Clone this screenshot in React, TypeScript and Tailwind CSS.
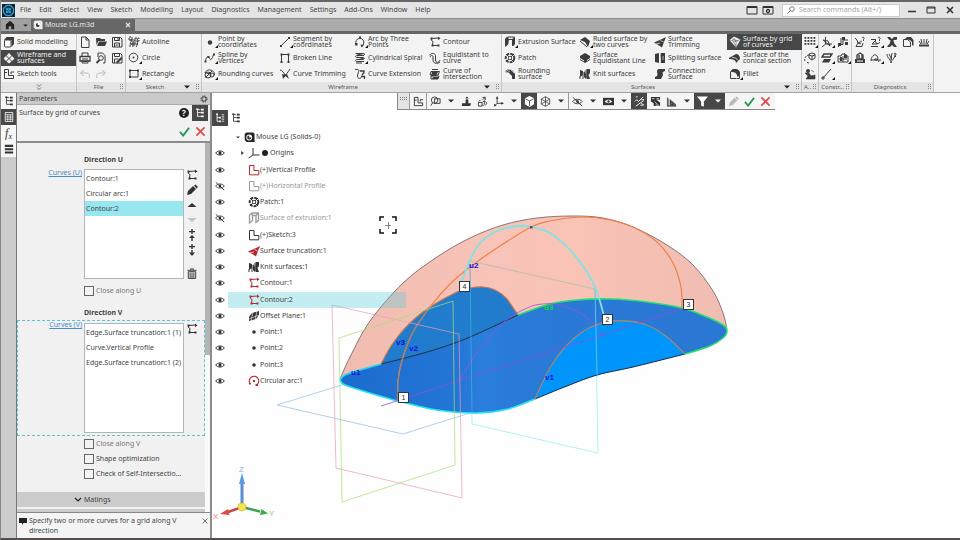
import React from 'react';
import clsx from 'clsx';

/* ---------- Icons (12 x 12 grid) ---------- */

const S = { fill: 'none', stroke: 'currentColor', strokeWidth: 1 };
const F = { fill: 'currentColor' };

const ICONS: Record<string, React.ReactNode> = {
  solid: (
    <>
      <path d="M1 4l2.5-3H11v7l-2.500 3V4z" {...F} />
      <rect x="1.500" y="4" width="6.500" height="7" rx="1" fill="#fff" stroke="currentColor" />
    </>
  ),
  grid: (
    <>
      <path d="M3.500 3.500L6 1l2.500 2.500L6 6zM.5 6.500L3 4l2.500 2.500L3 9zM6.500 6.500L9 4l2.500 2.500L9 9zM3.500 9.500L6 7l2.500 2.500L6 11.500z" {...F} />
    </>
  ),
  sketchTools: <path d="M1.500 1.500v9h9v-3h-5v-6zM8 6V4h3M1 4.500h3" {...S} />,
  newDoc: <path d="M2.500 1h4.500l3 3v7.500h-7.500zM7 1v3h3" {...S} />,
  open: <path d="M1 2h4l1 1h4v2H3.500L1.500 9zM4 5.500h8L10 10H2z" {...F} />,
  save: <path d="M1.500 1.500h8l1.500 1.500v8H1.500zM3.500 1.500v3h5v-3M3.500 11V7h5v4M4.500 9h3M7 2v2" {...S} />,
  print: (
    <>
      <path d="M3 4V1h6v3M3 8v3h6V8M4 9.500h4" {...S} />
      <path d="M1 4.500h10V9H1z" fill="none" stroke="currentColor" strokeWidth="1.300" />
      <path d="M3 7h6" {...S} />
    </>
  ),
  preview: (
    <>
      <path d="M3 5V1h4.500L10 3.500V11H8" {...S} />
      <circle cx="6" cy="6" r="2.300" {...S} />
      <path d="M4.500 8L1.500 11" fill="none" stroke="currentColor" strokeWidth="2" />
    </>
  ),
  saveAs: (
    <>
      <path d="M1.500 1.500h8l1.500 1.500v8H1.500zM3.500 1.500v3h5v-3M3.500 11V7h4" {...S} />
      <path d="M5 10l5-5 1.500 1.500-5 5z" {...F} />
    </>
  ),
  undo: <path d="M5 2L1.500 5 5 8M2 5h5c3 0 4 2 3 5" {...S} />,
  redo: <path d="M7 2l3.500 3L7 8M10 5H5C2 5 1 7 2 10" {...S} />,
  autoline: (
    <>
      <path d="M2 11c0-4 1-5 2-8M5 11c-1-3 1-6 2-7M1 4h5M3 8h7M8 11c2-2 2-6 1-9" {...S} />
      <path d="M1 1h3v3H1zM7 2h4v3H7zM4 6h3v3H4z" fill="none" stroke="currentColor" strokeDasharray="2 1" />
    </>
  ),
  circle: (
    <>
      <circle cx="5.500" cy="5.500" r="4.300" {...S} />
      <circle cx="5.500" cy="5.500" r="1" {...F} />
    </>
  ),
  rect: (
    <>
      <path d="M2 2.500h8v6.500H2z" {...S} />
      <path d="M1 1.500h2v2H1zM9 1.500h2v2H9zM1 8h2v2H1z" {...F} />
    </>
  ),
  point: <circle cx="6" cy="6.500" r="2.200" {...F} />,
  spline: (
    <>
      <path d="M1.500 9.500C2 6 3 4 4.500 5S6 9 7.500 7 9 3 10 2.500" {...S} />
      <path d="M.5 8.500h2v2h-2zM3.500 4h2v2h-2zM9 1.500h2v2H9z" {...F} />
    </>
  ),
  rounding: (
    <>
      <path d="M1 4.500c2-3 5-3 7-2 2 1 3 3 2 5M1 4.500l5 1.500M1.500 9.500L8 3" {...S} />
      <circle cx="4" cy="7" r="3" {...S} />
      <circle cx="8" cy="7" r="2" {...S} />
    </>
  ),
  segment: (
    <>
      <path d="M2 10l8-8" {...S} />
      <path d="M1 9h2v2H1zM9 1h2v2H9z" {...F} />
    </>
  ),
  broken: (
    <>
      <path d="M2.500 10V2.500h7V10" {...S} />
      <path d="M1.500 1.500h2v2h-2zM8.500 1.500h2v2h-2zM1.500 9h2v2h-2zM8.500 9h2v2h-2z" {...F} />
    </>
  ),
  trimCurve: (
    <>
      <path d="M1 2c2 0 4 3 5 5M11 1c-2 3-4 6-7 9" {...S} />
      <path d="M3 6l4 1-3 4zM5 7l3-1 2 5z" {...F} />
    </>
  ),
  arc3: (
    <>
      <path d="M2.500 8.500a4 4 0 117-.5L8 10.500" {...S} />
      <path d="M1 7h2.500v2.500H1zM5 .5h2v2H5zM6.500 8.500L10 9l-2.500 2.500z" {...F} />
    </>
  ),
  spiral: <path d="M1.500 1.500h8c2 0 1 2-1 2H3c-2 0-2 2 0 2h6c2 0 1 2 0 2H3c-2 0-2 2 0 2h7M2 11h6M3 2l7 1.500M3 5l7 2" {...S} />,
  extend: (
    <>
      <path d="M1 1.500h2.500c3 0 0 4 0 6.500 0 3 3 3 4 1" {...S} />
      <path d="M6 3h4v1.500L8 7M7 8.500h3.500V11" fill="none" stroke="currentColor" strokeWidth="1.300" />
    </>
  ),
  contour: (
    <>
      <path d="M2.500 2.500L10 2M2.500 3v1.500L4 5.500 3.500 9.500H9" {...S} />
      <path d="M1.500 1.500h2v2h-2zM2.500 8.500h2v2h-2zM8.500 8.500h2v2h-2zM9 .5l2.500 2L9 4z" {...F} />
    </>
  ),
  equidist: <path d="M1 3.500C1 1 6 .5 6.500 3.500V8c0 3 4 3 4.500 0M1 5c1-2 3-2 3 0v3c0 4 5 4 7 2" {...S} />,
  intersect: (
    <>
      <path d="M2 3.500h8.500L9 7H1zM3 1.500h6M2 8h8l-1 3H2z" {...S} />
      <path d="M3 4h6l-2 4H2zM4 9h5v2H3z" {...F} />
    </>
  ),
  extrusion: (
    <>
      <path d="M1.500 3L4 1h6.500v6.500L8.500 10V3.500h-4L2 10z" {...S} />
      <path d="M1 3l2-2h1.500v7L1 11zM8 3l3-2v7l-2 2z" {...F} />
    </>
  ),
  patch: (
    <>
      <circle cx="6" cy="6" r="4.300" fill="none" stroke="currentColor" strokeWidth="2" strokeDasharray="3 1" />
      <path d="M2 2l8 8M10 2l-8 8" {...S} />
      <path d="M4 6l2-2 2 2-2 2z" fill="#fff" stroke="currentColor" strokeWidth=".8" />
    </>
  ),
  roundSurf: (
    <>
      <path d="M1 4c1-3 5-4 8-1l2 3v5H8V8L5 5z" {...F} />
      <path d="M1 4l5-3 4 4M3 5l3-2" fill="none" stroke="#fff" strokeWidth=".6" />
    </>
  ),
  ruled: (
    <>
      <path d="M1 4l5-3 5 4-5 1zM6 6l3 5 2-6z" {...F} />
      <path d="M1 5l7 6" {...S} />
    </>
  ),
  surfEq: (
    <>
      <path d="M1 4l5-3 5 3v4L6 11 1 8z" {...F} />
      <path d="M1 6.500l4 2.500M8 8.500l3-2" fill="none" stroke="#fff" />
    </>
  ),
  knit: (
    <>
      <path d="M1 2l3 1v4L1 9zM5 3l2 3v5l-2-2zM7.500 1H11v4L9.500 7 11 11H7.500z" {...F} />
      <path d="M1 8v3M4 4v7M7 2v8" {...S} />
    </>
  ),
  truncation: (
    <>
      <path d="M0 6.500l7-3L12 1l-2 5-2 5.500-3-2z" {...F} />
      <path d="M2 8l4-1M6.500 4.500l3 1.500" fill="none" stroke="#fff" strokeWidth=".7" />
    </>
  ),
  split: (
    <>
      <path d="M1 2l4-1v10L1 10zM6.500 1H11v10H6.500z" {...F} />
      <path d="M6 1c-1 4 1 6 0 10" fill="none" stroke="#fff" />
      <path d="M9 4v4" fill="none" stroke="#fff" strokeWidth=".6" />
    </>
  ),
  connect: <path d="M4 1h7v2L9 4c-1 1 0 2 0 3l-2 4H1V9l2-1c1-1 0-3 0-5z" {...F} />,
  gridWhite: (
    <>
      <path d="M.5 4L5 .5 11.500 3.500 7 11.500z" {...F} />
      <path d="M1 4l6 1.500L11 3.500M3 3l6 2M4 5l3 6M5 2l2 4v5" fill="none" stroke="#474747" strokeWidth=".5" />
    </>
  ),
  conical: (
    <>
      <path d="M0 6l7-4c3 0 4 3 4 5L7 11c0-3-3-4-7-4z" {...F} />
      <path d="M3 5.500c3 0 5 1 6 3" fill="none" stroke="#fff" strokeWidth=".7" />
    </>
  ),
  fillet: (
    <>
      <path d="M1.500 10.500V4l2-2.500h4c2 0 3 2 3 4v5H8" {...S} />
      <path d="M3 2c4-2 8 0 8 5L8.500 9C8 5 6 4 2 4z" {...F} />
      <path d="M1.500 10.500h6" {...S} />
    </>
  ),
  array: (
    <>
      {[1, 4, 7, 10].map((x) => [1, 4, 7].map((y) => <rect key={`${x}-${y}`} x={x - 0.500} y={y} width="1.800" height="1.800" {...F} />))}
    </>
  ),
  orbit: (
    <>
      <path d="M1 9a4.500 4.500 0 014-6M3 10.500l2 .5" fill="none" stroke="currentColor" strokeDasharray="2 1" />
      <path d="M5 2l3-1 3 1v4L8 8 5 6zM5 3l3 1 3-1M8 4v4" {...S} />
    </>
  ),
  person: (
    <>
      <circle cx="4" cy="3" r="2" {...F} />
      <path d="M1 5h4l2 3 4-1v4H2L4 8zM7 2l3 2" fill="currentColor" stroke="currentColor" strokeWidth=".6" />
    </>
  ),
  axes: <path d="M4.500 1v7H11M4.500 8L1 11M2 4l7 6M2 4l5 1 2 5" {...S} />,
  local: (
    <>
      <path d="M1 8.500h5V4h5M4 2v6l-3 3" {...S} />
      <path d="M5 1h3v3H5zM8 6h3v3H8zM1 7h3v3H1z" {...F} />
    </>
  ),
  plane: (
    <>
      <path d="M3 2h8L9 5H1z" fill="none" stroke="currentColor" strokeWidth="1.400" />
      <path d="M3 7h7l-2 3.500H1z" {...F} />
    </>
  ),
  control: (
    <>
      <path d="M1 4h3l1-2h3l1 2h2v6H1zM6 4v6M2 7h8" {...S} />
      <path d="M7 1l3 2v3H7zM3 5h2v4H3z" {...F} />
    </>
  ),
  diag: <path d="M10 1L2 10M1 9h2v2H1z" {...S} />,
  q1: <path d="M1 2l2 2 1 3-2 3.500h6L9 7M4 7l4-2M8 2c1-2 3 0 1.500 1.500V5M4 7l3 1" {...S} />,
  q2: <path d="M1 3.500h5M6 4L2 8h5l3-1.500M1 10.500h7M8 2c1-2 3 0 1.500 1.500V5M5 5l2 3" {...S} />,
  q3: (
    <>
      <path d="M1 1h3l2 2 2-2h3v3H8v3l3 4H8L6 9l-2 2H1l3-4V5z" {...F} />
      <path d="M1 4l4 1M7 5l4-1" fill="none" stroke="#fff" strokeWidth=".7" />
    </>
  ),
  q4: (
    <>
      <path d="M3 3l2-2h4l2.500 3v6L10 9V6L8 4z" {...F} />
      <path d="M1.500 3.500h4l3 2.500v4.500h-7z" {...S} />
    </>
  ),
  q5: (
    <>
      <path d="M1 9h10M3 8l-2-3M6 8V3M9 8l2-3M4 8L3 3M8 8l1-5" {...S} />
      <path d="M1 9h10v1.500H1z" {...F} />
    </>
  ),
  mass: (
    <>
      <path d="M1 7h10v4H1z" {...F} />
      <path d="M3 7V3l3-2 3 2v4M5 3v4h3V3" fill="none" stroke="currentColor" strokeWidth="1.400" />
      <path d="M3 9h6" stroke="#fff" />
    </>
  ),
  compass: <path d="M1 9c0-5 4-8 6-5s0 5-2 4 2-3 4 2M1 8h10" {...S} />,
  q7: <path d="M1 2c0 4 3 4 4 9 1-4 4-4 4-9M3 2l3 6M6 1l-1 7M8 2c1-2 3 0 1.500 1.500V5" {...S} />,
  zoom: (
    <>
      <circle cx="5" cy="4.500" r="3.500" {...S} />
      <path d="M5 3h6v5H5zM3 7L1 10.500" {...S} />
    </>
  ),
  normal: (
    <>
      <path d="M1 8h4V4h3v4h3l-1 3H1z" {...F} />
      <path d="M6.500 5V1M5 2.500L6.500 1 8 2.500" {...S} />
    </>
  ),
  rotate: <path d="M1.500 7h4v4h-4zM6 7l2-2v4l-2 2M2 6l2-2M6 1.500h3v3M9 1.500L6 4M9 6c2 1 2 3 0 4" {...S} />,
  triad: (
    <>
      <path d="M4.500 2v6H10M4.500 8L2 10.500" {...S} />
      <path d="M4.500 0l1.500 3H3zM12 8L9 6.500v3zM1 11.500l.5-3 2.500 2z" {...F} />
    </>
  ),
  cube: (
    <>
      <path d="M6 0l5 2.500v6.500L6 12 1 9V2.500z" {...F} />
      <path d="M1.500 3L6 5.500 10.500 3M6 5.500V11" fill="none" stroke="#444" />
    </>
  ),
  wireCube: <path d="M6 .8l4.500 2.500v5.500L6 11.200 1.500 8.800V3.300zM1.500 3.300L6 6l4.500-2.700M6 6v5.200M6 .8V6L1.500 8.800M6 6l4.500 2.800" fill="none" stroke="currentColor" strokeWidth=".8" />,
  eye: (
    <>
      <path d="M.8 6C3 2.800 9 2.800 11.200 6 9 9.200 3 9.200.8 6z" fill="none" stroke="currentColor" strokeWidth="1.200" />
      <circle cx="6" cy="6" r="1.800" {...F} />
    </>
  ),
  eyeOff: (
    <>
      <path d="M.8 6C3 2.800 9 2.800 11.200 6 9 9.200 3 9.200.8 6z" {...S} />
      <circle cx="6" cy="6" r="1.500" {...F} />
      <path d="M1 1.500l10 9.500" {...S} />
    </>
  ),
  eyeBox: (
    <>
      <path d="M0 2h12v8H0z" {...F} />
      <path d="M2 6c2-2.500 6-2.500 8 0-2 2.500-6 2.500-8 0z" fill="#fff" />
      <circle cx="6" cy="6" r="1.300" {...F} />
    </>
  ),
  percent: <path d="M1 6l2-2 2 2 5-5M10.500 5L2 11M8 8l3 2M7 10h3M2 1h2M8 4h3" {...S} />,
  texture: (
    <>
      <path d="M1 1h10v3H7l4 3v4H4V8L1 6z" {...F} />
      <path d="M2 3h3M7 3h3M5 6l3 3M6 10h4" stroke="#fff" strokeWidth=".8" />
    </>
  ),
  section: (
    <>
      <path d="M1 1l2 2v8H1zM4 3l7 6v2H4z" fill="currentColor" opacity=".75" />
      <path d="M5 6l3 3H5zM1 11h10" fill="#999" stroke="currentColor" />
    </>
  ),
  funnel: <path d="M0 .5h12L7.500 6v5.500l-3-1V6z" {...F} />,
  pencil: <path d="M1 11l1-4 5-5 3 3-5 5zM8 1.500l1.500-1L12 3l-1.500 1.500z" {...F} />,
  tree: (
    <>
      <path d="M3 1v9h4M3 5.500h4M3 2h3" {...S} />
      <path d="M1.500.5h2.500v2H1.500zM7 1h3.500v2H7zM7 4.500h3.500v2H7zM7 9h3.500v2H7z" {...F} />
    </>
  ),
  treeList: (
    <>
      <path d="M2.500 1v9h3M2.500 5.500h3" {...S} />
      <path d="M1.500.5h2v2h-2zM5 4.500h2v2H5zM5 9h2v2H5z" {...F} />
      <path d="M8 2h3M8 4h3M8 6h3M8 8h3M8 10h3" fill="none" stroke="currentColor" strokeWidth=".8" />
    </>
  ),
  sheet: (
    <>
      <path d="M1.500.5h9v11h-9z" {...S} />
      <path d="M2 3h8M2 5h8M2 7h8M2 9h8M4.500 3v8M7.500 3v8" fill="none" stroke="currentColor" strokeWidth=".7" />
    </>
  ),
  bars: <path d="M1 1h10v2.500H1zM1 5h10v2.500H1zM1 9h10v2.500H1z" {...F} />,
  gear: (
    <>
      <circle cx="6" cy="6" r="3.300" fill="none" stroke="currentColor" strokeWidth="1.600" />
      <circle cx="6" cy="6" r="4.800" fill="none" stroke="currentColor" strokeWidth="1.400" strokeDasharray="1.900 1.870" />
    </>
  ),
  check: <path d="M1 6.500l3.500 4L11 2" fill="none" stroke="#279a58" strokeWidth="2" />,
  cross: <path d="M1.500 1.500l9 9M10.500 1.500l-9 9" fill="none" stroke="#e04848" strokeWidth="1.800" />,
  up: <path d="M1.500 8L6 4l4.500 4z" {...F} />,
  down: <path d="M1.500 4L6 8l4.500-4z" {...F} />,
  plusUp: <path d="M5.300 0h1.400v2H9v1.200H6.700V5H5.300V3.200H3V2h2.300zM6 6l3 3H6.700v3H5.300V9H3z" {...F} />,
  plusDown: <path d="M5.300 0h1.400v2H9v1.200H6.700V5H5.300V3.200H3V2h2.300zM5.300 6h1.400v2.500H9L6 12 3 8.500h2.300z" {...F} />,
  trash: (
    <>
      <path d="M2 4h8v7.500H2zM1 2.500h10M4.500 2v-1h3v1" {...S} />
      <path d="M4 5v6M6 5v6M8 5v6" {...S} />
    </>
  ),
  sketch: <path d="M1.500 1.500v9.300h9.300V6.500H6v-5z" {...S} />,
  origin: <path d="M5 1v7h6.500M5 8L.5 11" {...S} />,
  surfGrey: <path d="M1.500 3L4 1h6.500v7.500L8 10.500v-7H4.500v5L1.500 11zM4 1v2.500M10.500 1L8 3.500" fill="none" stroke="currentColor" strokeWidth="1.300" />,
  planeHatch: (
    <>
      <path d="M1 7l3-4 7-2v4L8 9l-7 2z" {...F} />
      <path d="M1 9l10-4M5 2L3 11M9 1L7 10" fill="none" stroke="#fff" strokeWidth=".6" />
    </>
  ),
  dot: <circle cx="6" cy="6" r="1.800" {...F} />,
  arcTree: (
    <>
      <path d="M2 8.500A4.700 4.700 0 118.500 10" fill="none" stroke="currentColor" strokeWidth="1.200" />
      <path d="M5 5h2v2H5zM1 8h2v1.500H1zM7.500 9H10v2H7.500z" {...F} />
    </>
  ),
  part: (
    <>
      <path d="M3 .5h7L11.500 2v9H3L.8 9V2z" {...F} />
      <circle cx="5.700" cy="6" r="3.200" fill="#fff" />
      <path d="M5.700 3.700A2.300 2.300 0 108 6H5.700z" fill="#333" />
    </>
  ),
  home: <path d="M6 1l5 4.500V11H7.500V7.500h-3V11H1V5.500z" {...F} />,
};

const Icon: React.FC<{ name: string; className?: string }> = ({ name, className }) => (
  <svg viewBox="0 0 12 12" className={clsx('shrink-0', className || 'h-3 w-3')} aria-hidden="true">
    {ICONS[name]}
  </svg>
);

const Caret = ({ className }: { className?: string }) => (
  <svg viewBox="0 0 6 4" className={clsx('shrink-0', className || 'h-1 w-1.5')} aria-hidden="true">
    <path d="M0 .5h6L3 3.500z" fill="currentColor" />
  </svg>
);

/* ---------- Title bar ---------- */

const MENU = ['File', 'Edit', 'Select', 'View', 'Sketch', 'Modelling', 'Layout', 'Diagnostics', 'Management', 'Settings', 'Add-Ons', 'Window', 'Help'];

const MenuBar = () => (
  <header className="box-content flex h-4 items-center border-t-2 border-[#666] bg-[#e4e4e4] pl-px pr-0.5">
    <svg viewBox="0 0 13 13" className="h-[13px] w-[13px]" aria-hidden="true">
      <rect width="13" height="13" fill="#12232e" />
      <path d="M4.500 1.500h4l3 3v4l-3 3h-4l-3-3v-4z" fill="none" stroke="#2c9bd0" strokeWidth="1.300" />
      <path d="M4 4l5 5M9 4L4 9" stroke="#2c9bd0" strokeWidth="1.200" />
      <circle cx="6.500" cy="6.500" r="2.200" fill="none" stroke="#2c9bd0" />
    </svg>
    <nav className="flex gap-2 pl-[5px]">
      {MENU.map((item) => (
        <button key={item}>{item}</button>
      ))}
    </nav>
    <div className="ml-auto flex items-center text-[#333]">
      <button aria-label="Window layout" className="px-0.5">
        <svg viewBox="0 0 12 10" className="h-2.5 w-3">
          <path d="M1 1.500h10v7.500H1zM1 2.500h10" fill="none" stroke="currentColor" />
        </svg>
      </button>
      <button aria-label="Screen settings" className="px-0.5">
        <svg viewBox="0 0 12 10" className="h-2.5 w-3">
          <path d="M1 1.500h10v7.500H1zM1 2.500h10" fill="none" stroke="currentColor" />
          <circle cx="6" cy="6" r="1.500" fill="none" stroke="currentColor" strokeWidth="1.300" />
        </svg>
      </button>
      <label className="ml-1.5 flex h-[13px] w-[118px] items-center gap-1 border border-[#ccc] bg-white pl-1">
        <svg viewBox="0 0 8 8" className="h-2 w-2 shrink-0 text-[#777]">
          <circle cx="5" cy="3" r="2.300" fill="none" stroke="currentColor" />
          <path d="M3.300 4.700L.5 7.500" stroke="currentColor" />
        </svg>
        <input
          type="text"
          aria-label="Search commands"
          placeholder="Search commands (Alt+/)"
          className="w-full min-w-0 bg-transparent placeholder-[#a5a5a5] focus:outline-none"
        />
      </label>
      <button aria-label="Minimize" className="ml-1 px-1">
        <svg viewBox="0 0 8 8" className="h-2 w-2">
          <path d="M0 5.500h8" stroke="currentColor" strokeWidth="1.500" />
        </svg>
      </button>
      <button aria-label="Maximize" className="ml-0.5 px-1">
        <svg viewBox="0 0 10 8" className="h-2 w-2.5">
          <path d="M1 1h8v6H1zM1 2h8" fill="none" stroke="currentColor" />
        </svg>
      </button>
      <button aria-label="Close" className="ml-0.5 px-1">
        <svg viewBox="0 0 8 8" className="h-2 w-2">
          <path d="M1 1l6 6M7 1L1 7" stroke="currentColor" strokeWidth="1.600" />
        </svg>
      </button>
    </div>
  </header>
);

const TabBar = () => (
  <div className="flex h-4 shrink-0 border-b-[3px] border-t border-[#676767] border-t-[#8c8c8c] bg-[#acacac]">
    <button aria-label="Home" className="flex w-[30px] items-center gap-2 bg-[#a0a0a0] pl-1 text-[#222]">
      <Icon name="home" className="h-2.5 w-2.5" />
      <Caret className="h-[3px] w-[5px]" />
    </button>
    <div className="flex w-[104px] items-center gap-0.5 bg-[#676767] pl-0.5 pr-1 text-[#e8e8e8]">
      <Icon name="part" className="h-2.5 w-2.5" />
      <span>Mouse LG.m3d</span>
      <button aria-label="Close tab" className="ml-auto">
        <svg viewBox="0 0 6 6" className="h-1.5 w-1.5">
          <path d="M1 1l4 4M5 1L1 5" stroke="currentColor" strokeWidth="1.200" />
        </svg>
      </button>
    </div>
  </div>
);

/* ---------- Ribbon ---------- */

interface Tool {
  icon: string;
  label?: string;
  fly?: boolean;
  active?: boolean;
  faded?: boolean;
}

const ToolButton: React.FC<{ tool: Tool; className?: string }> = ({ tool, className }) => (
  <button
    aria-label={tool.label || tool.icon}
    className={clsx(
      'flex h-4 items-center gap-0.5 pl-0.5 text-left',
      tool.active ? 'bg-[#474747] text-[#f0f0f0]' : 'text-[#3c3c3c]',
      tool.faded && 'opacity-30',
      className
    )}
  >
    <span className="relative shrink-0">
      <Icon name={tool.icon} />
      {tool.fly && (
        <svg viewBox="0 0 4 4" className="absolute -right-0.5 bottom-0 h-[3px] w-[3px]">
          <path d="M4 0v4H0z" fill="#111" />
        </svg>
      )}
    </span>
    {tool.label && <span className="whitespace-pre leading-[6px]">{tool.label}</span>}
  </button>
);

interface GroupProps {
  title: string;
  tools: Tool[];
  width: string;
  cell: string;
  rows?: boolean;
  more?: boolean;
}

const Group: React.FC<GroupProps> = ({ title, tools, width, cell, rows, more }) => (
  <section className={clsx('flex shrink-0 flex-col border-r border-[#c6c6c6]', width)}>
    <div className={clsx('h-12', rows ? 'flex flex-wrap content-start' : 'grid grid-flow-col grid-rows-3 justify-start')}>
      {tools.map((t, i) => (
        <ToolButton key={i} tool={t} className={cell} />
      ))}
    </div>
    <div className="flex h-2.5 items-center bg-[#e4e4e4] pr-0.5 text-[6px] text-[#555]">
      <span className="flex-1 whitespace-nowrap text-center">{title}</span>
      {more && <Caret className="mr-1.5 h-1 w-1.5 text-[#222]" />}
      <svg viewBox="0 0 3 6" className="h-1.5 w-[3px] shrink-0 text-[#888]">
        <path d="M.5 0v6M2.500 0v6" stroke="currentColor" strokeDasharray="1 1" />
      </svg>
    </div>
  </section>
);

const MODES: Tool[] = [
  { icon: 'solid', label: 'Solid modelling' },
  { icon: 'grid', label: 'Wireframe and\nsurfaces', active: true },
  { icon: 'sketchTools', label: 'Sketch tools' },
];

const FILE_TOOLS: Tool[] = [
  { icon: 'newDoc' },
  { icon: 'open' },
  { icon: 'save' },
  { icon: 'print' },
  { icon: 'preview' },
  { icon: 'saveAs' },
  { icon: 'undo', faded: true },
  { icon: 'redo', faded: true },
];

const SKETCH_TOOLS: Tool[] = [
  { icon: 'autoline', label: 'Autoline' },
  { icon: 'circle', label: 'Circle', fly: true },
  { icon: 'rect', label: 'Rectangle', fly: true },
];

const WIRE_TOOLS: Tool[] = [
  { icon: 'point', label: 'Point by\ncoordinates', fly: true },
  { icon: 'spline', label: 'Spline by\nVertices', fly: true },
  { icon: 'rounding', label: 'Rounding curves', fly: true },
  { icon: 'segment', label: 'Segment by\ncoordinates', fly: true },
  { icon: 'broken', label: 'Broken Line' },
  { icon: 'trimCurve', label: 'Curve Trimming' },
  { icon: 'arc3', label: 'Arc by Three\nPoints', fly: true },
  { icon: 'spiral', label: 'Cylindrical Spiral', fly: true },
  { icon: 'extend', label: 'Curve Extension' },
  { icon: 'contour', label: 'Contour' },
  { icon: 'equidist', label: 'Equidistant to\ncurve' },
  { icon: 'intersect', label: 'Curve of\nintersection' },
];

const SURFACE_TOOLS: Tool[] = [
  { icon: 'extrusion', label: 'Extrusion Surface', fly: true },
  { icon: 'patch', label: 'Patch' },
  { icon: 'roundSurf', label: 'Rounding\nsurface' },
  { icon: 'ruled', label: 'Ruled surface by\ntwo curves', fly: true },
  { icon: 'surfEq', label: 'Surface\nEquidistant Line' },
  { icon: 'knit', label: 'Knit surfaces' },
  { icon: 'truncation', label: 'Surface\nTrimming' },
  { icon: 'split', label: 'Splitting surface' },
  { icon: 'connect', label: 'Connection\nSurface' },
  { icon: 'gridWhite', label: 'Surface by grid\nof curves', active: true },
  { icon: 'conical', label: 'Surface of the\nconical section' },
  { icon: 'fillet', label: 'Fillet', fly: true },
];

const ARRAY_TOOLS: Tool[] = [{ icon: 'array', fly: true }, { icon: 'orbit' }, { icon: 'person' }];

const CONSTR_TOOLS: Tool[] = [
  { icon: 'axes', fly: true },
  { icon: 'local' },
  { icon: 'plane', fly: true },
  { icon: 'control', fly: true },
  { icon: 'diag', fly: true },
];

const DIAG_TOOLS: Tool[] = [
  { icon: 'q1' },
  { icon: 'q2', fly: true },
  { icon: 'q3' },
  { icon: 'q4' },
  { icon: 'q5' },
  { icon: 'mass' },
  { icon: 'compass', fly: true },
  { icon: 'q7' },
];

const Ribbon = () => (
  <div className="flex shrink-0 overflow-hidden border-b border-[#a2a2a2] bg-[#f3f3f3]">
    <section className="flex w-[76px] shrink-0 flex-col border-r border-[#c6c6c6]">
      {MODES.map((t) => (
        <ToolButton key={t.label} tool={t} />
      ))}
      <button aria-label="More modes" className="flex h-2.5 items-center justify-center bg-[#e4e4e4]">
        <svg viewBox="0 0 6 6" className="h-1.5 w-1.5">
          <path d="M1 .5l2 2 2-2M1 3.500l2 2 2-2" fill="none" stroke="#555" strokeWidth=".8" />
        </svg>
      </button>
    </section>
    <Group title="File" tools={FILE_TOOLS} width="w-[49px]" cell="w-4" rows />
    <Group title="Sketch" tools={SKETCH_TOOLS} width="w-[76px]" cell="w-[75px]" more />
    <Group title="Wireframe" tools={WIRE_TOOLS} width="w-[300px]" cell="w-[75px]" more />
    <Group title="Surfaces" tools={SURFACE_TOOLS} width="w-[300px]" cell="w-[75px]" more />
    <Group title="A.." tools={ARRAY_TOOLS} width="w-[17px]" cell="w-4" />
    <Group title="Constr..." tools={CONSTR_TOOLS} width="w-[33px]" cell="w-4" rows />
    <Group title="Diagnostics" tools={DIAG_TOOLS} width="w-[82px]" cell="w-4" rows />
    <div className="flex-1" />
  </div>
);

/* ---------- Parameters panel ---------- */

const SideStrip = () => (
  <aside className="w-4 shrink-0 border-r border-[#777] bg-[#cbcbcb]">
    <div className="flex flex-col bg-[#f7f7f7] text-[#333]">
      <button aria-label="Model tree" className="flex h-4 items-center justify-center">
        <Icon name="tree" className="h-2.5 w-2.5" />
      </button>
      <button aria-label="Parameters" className="flex h-4 items-center justify-center bg-[#474747] text-white">
        <Icon name="sheet" className="h-2.5 w-2.5" />
      </button>
      <button aria-label="Variables" className="h-4 font-['Liberation_Serif',serif] text-[12px] italic leading-4">
        f<sub className="text-[8px]">x</sub>
      </button>
      <button aria-label="Layers" className="flex h-4 items-center justify-center">
        <Icon name="bars" className="h-2.5 w-2.5" />
      </button>
    </div>
  </aside>
);

const CurveList = ({ items, selected, label }: { items: string[]; selected?: number; label: string }) => (
  <ul aria-label={label} className="h-[110px] w-[100px] shrink-0 border border-[#b5b5b5] bg-white pt-px">
    {items.map((item, i) => (
      <li key={item}>
        <button className={clsx('block h-[15px] w-full whitespace-nowrap pl-px text-left', i === selected && 'bg-[#98e6f0]')}>{item}</button>
      </li>
    ))}
  </ul>
);

const CheckRow = ({ label, faded }: { label: string; faded?: boolean }) => (
  <label className={clsx('ml-[67px] flex h-[15px] items-center gap-0.5', faded && 'text-[#777]')}>
    <input type="checkbox" className="h-2.5 w-2.5 appearance-none border border-[#666] bg-[#f4f4f4]" />
    {label}
  </label>
);

const LIST_ACTIONS = ['contour', 'pencil', 'up', 'down', 'plusUp', 'plusDown'];

const ParametersPanel = () => (
  <section className="flex w-[195px] shrink-0 flex-col border-r-2 border-[#8c8c8c] bg-[#f1f1f1]">
    <h2 className="flex h-3 items-center justify-between border-b border-[#aaa] bg-[#cacaca] px-0.5">
      Parameters
      <button aria-label="Panel settings">
        <Icon name="gear" className="h-2 w-2" />
      </button>
    </h2>
    <div className="flex h-[38px] shrink-0 border-b-2 border-[#8c8c8c] pr-0.5">
      <p className="pl-0.5 pt-[3px]">Surface by grid of curves</p>
      <div className="ml-auto grid grid-cols-2 content-start">
        <button aria-label="Help" className="flex h-4 w-4 items-center justify-center">
          <span className="h-2.5 w-2.5 rounded-full bg-[#222] text-center text-[8px] font-bold leading-[10px] text-white">?</span>
        </button>
        <button aria-label="Tree in panel" className="flex h-4 w-4 items-center justify-center bg-[#474747] text-white">
          <Icon name="tree" className="h-2.5 w-2.5" />
        </button>
        <button aria-label="Apply" className="flex h-5 w-4 items-center justify-center">
          <Icon name="check" className="h-[11px] w-[11px]" />
        </button>
        <button aria-label="Cancel" className="flex h-5 w-4 items-center justify-center">
          <Icon name="cross" className="h-[11px] w-[11px]" />
        </button>
      </div>
    </div>
    <div className="flex min-h-0 flex-1">
      <div className="flex min-w-0 flex-1 flex-col">
        <h3 className="ml-[67px] pt-3 font-bold">Direction U</h3>
        <div className="flex pl-0.5 pt-1">
          <a href="#curves-u" className="w-[65px] pr-0.5 text-right leading-2 text-[#4a8cc8] underline">
            Curves (U)
          </a>
          <CurveList label="Curves (U)" items={['Contour:1', 'Circular arc:1', 'Contour:2']} selected={2} />
          <div className="flex flex-col gap-[3px] pl-0.5 text-[#333]">
            {LIST_ACTIONS.map((name) => (
              <button key={name} aria-label={name} className={clsx('h-3', name === 'down' && 'opacity-25')}>
                <Icon name={name} />
              </button>
            ))}
            <button aria-label="Delete" className="mt-auto h-3">
              <Icon name="trash" className="h-[11px] w-3" />
            </button>
          </div>
        </div>
        <div className="pt-1">
          <CheckRow label="Close along U" faded />
        </div>
        <h3 className="ml-[67px] pb-0.5 pt-2.5 font-bold">Direction V</h3>
        <div className="flex border border-dashed border-[#5cc4d4] pb-0.5 pl-px">
          <a href="#curves-v" className="w-[65px] pr-0.5 text-right leading-2 text-[#4a8cc8] underline">
            Curves (V)
          </a>
          <div className="flex pt-0.5">
            <CurveList label="Curves (V)" items={['Edge.Surface truncation:1 (1)', 'Curve.Vertical Profile', 'Edge.Surface truncation:1 (2)']} />
            <button aria-label="Create contour" className="h-3 pl-0.5 text-[#333]">
              <Icon name="contour" />
            </button>
          </div>
        </div>
        <CheckRow label="Close along V" faded />
        <CheckRow label="Shape optimization" />
        <CheckRow label="Check of Self-Intersectio..." />
        <div className="mt-auto">
          <button className="flex h-[15px] w-full items-center gap-0.5 bg-[#cbcbcb] pl-[57px]">
            <svg viewBox="0 0 8 6" className="h-1.5 w-2">
              <path d="M1 1l3 3 3-3" fill="none" stroke="#222" strokeWidth="1.200" />
            </svg>
            Matings
          </button>
          <div className="mt-0.5 h-[3px] bg-[#cbcbcb]" />
        </div>
      </div>
      <div className="w-[5px] shrink-0 bg-[#fafafa]">
        <div className="h-[212px] bg-[#b4b4b4]" />
      </div>
    </div>
    <div className="flex h-[26px] shrink-0 items-start gap-0.5 border-t border-[#888] bg-[#f4f4f4] px-0.5 pt-[3px] leading-[10px]">
      <svg viewBox="0 0 8 8" className="mt-px h-2 w-2 shrink-0">
        <path d="M0 1h8v5H4.500L3 8V6H0z" fill="#222" />
      </svg>
      <p className="flex-1">
        Specify two or more curves for a grid along V
        <br />
        direction
      </p>
      <button aria-label="Close hint" className="h-2.5">
        <svg viewBox="0 0 6 6" className="h-1.5 w-1.5">
          <path d="M.5.5l5 5M5.500.5l-5 5" stroke="#555" strokeWidth=".8" />
        </svg>
      </button>
    </div>
  </section>
);

/* ---------- Viewport ---------- */

type Pt = [number, number];

// Catmull-Rom through the points, written as cubic segments
const seg = (p: Pt[]) =>
  p
    .slice(1)
    .map((b, i) => {
      const a = p[i];
      const z = p[i - 1] || a;
      const c = p[i + 2] || b;
      return `C${a[0] + (b[0] - z[0]) / 6} ${a[1] + (b[1] - z[1]) / 6} ${b[0] - (c[0] - a[0]) / 6} ${b[1] - (c[1] - a[1]) / 6} ${b[0]} ${b[1]}`;
    })
    .join('');

const curve = (p: Pt[]) => `M${p[0][0]} ${p[0][1]}${seg(p)}`;

const DOME: Pt[] = [[340, 379], [350, 357], [370, 321], [403, 283], [437, 257], [470, 238], [503, 225], [537, 218], [573, 216], [603, 218], [633, 227], [667, 245], [693, 265], [713, 291], [723, 313], [727, 329]];
const LEFT_TOP: Pt[] = [[340, 380], [345, 375], [360, 370], [381, 364]];
const BLACK_TOP: Pt[] = [[381, 364], [405, 358], [437, 349], [470, 337], [518, 315]];
const GREEN: Pt[] = [[518, 315], [550, 304], [577, 300], [610, 299], [647, 302], [682, 308], [707, 317], [723, 325], [727, 331], [723, 338], [710, 346], [685, 354]];
const BLACK_BOTTOM: Pt[] = [[685, 354], [633, 367], [597, 375], [567, 386], [535, 399]];
const CYAN_BOTTOM: Pt[] = [[535, 399], [508, 409], [477, 413], [437, 410], [398, 401], [370, 393], [345, 385], [340, 380]];
const ARCH_BACK: Pt[] = [[381, 364], [393, 343], [410, 323], [430, 307], [457, 292], [470, 288], [483, 287], [495, 290], [506, 298], [518, 315]];
const ARCH_FRONT: Pt[] = [[535, 399], [550, 368], [567, 345], [587, 329], [607, 322], [627, 321], [647, 325], [667, 337], [685, 354]];
const SPINE: Pt[] = [[398, 401], [398, 380], [403, 357], [413, 332], [430, 307], [450, 284], [470, 267], [497, 248], [531, 227], [550, 221], [583, 217], [610, 220], [633, 227], [657, 242], [673, 263], [681, 287], [682, 307]];
const CONTOUR2: Pt[] = [[462, 281], [470, 260], [480, 243], [497, 231], [517, 226], [532, 227], [550, 233], [570, 250], [587, 272], [597, 292], [604, 316]];
const MAGENTA: Pt[] = [[459, 381], [477, 353], [503, 323], [527, 308], [543, 304], [560, 305], [580, 313], [593, 323], [602, 335]];

const TAGS = [
  { n: 1, x: 403, y: 398 },
  { n: 2, x: 607, y: 320 },
  { n: 3, x: 688, y: 305 },
  { n: 4, x: 464, y: 287 },
];

const AXES = [
  { t: 'u1', x: 351, y: 375 },
  { t: 'u2', x: 469, y: 268 },
  { t: 'v1', x: 545, y: 380 },
  { t: 'v2', x: 409, y: 351 },
  { t: 'v3', x: 396, y: 345 },
];

const Model = () => (
  <svg viewBox="212 93 748 445" className="absolute inset-0 h-full w-full" aria-label="Mouse model">
    <defs>
      <linearGradient id="skin" x1="0" y1="0" x2="1" y2="0">
        <stop offset="0" stopColor="#f1bcb0" />
        <stop offset=".4" stopColor="#f8c3b8" />
        <stop offset=".6" stopColor="#f9c3b6" />
        <stop offset="1" stopColor="#f0bdb2" />
      </linearGradient>
      <linearGradient id="base" x1="0" y1="0" x2="1" y2="0">
        <stop offset="0" stopColor="#1b6ccc" />
        <stop offset=".3" stopColor="#2476d6" />
        <stop offset=".37" stopColor="#2a7edc" />
        <stop offset=".45" stopColor="#2a7ad8" />
        <stop offset="1" stopColor="#2b77d4" />
      </linearGradient>
    </defs>
    <g fill="none" strokeWidth=".8">
      <path d="M345 384L277 405l126 29 67-21" stroke="#9cc4e8" />
      <path d="M470 261l2 163 126 29-3-164" stroke="#a5ecf0" />
    </g>
    <path d={`${curve(DOME)}L727 331L640 345L381 364L340 380z`} fill="url(#skin)" />
    <path d={`${curve(ARCH_BACK)}L500 345L381 364z`} fill="#217ccd" />
    <path d={`${curve(LEFT_TOP)}${seg(BLACK_TOP)}${seg(GREEN)}${seg(BLACK_BOTTOM)}${seg(CYAN_BOTTOM)}z`} fill="url(#base)" />
    <path d={`${curve(ARCH_FRONT)}${seg(BLACK_BOTTOM)}z`} fill="#0095fb" />
    <g fill="none">
      <path d={curve(DOME)} stroke="#7d6a68" strokeWidth=".9" />
      <path d={curve(BLACK_TOP)} stroke="#222e3c" />
      <path d={curve(BLACK_BOTTOM)} stroke="#14304c" />
      <path d={curve(ARCH_BACK)} stroke="#c07850" strokeWidth="1.200" />
      <path d={curve(ARCH_FRONT)} stroke="#a08878" strokeWidth="1.300" />
      <path d={curve(SPINE)} stroke="#f08048" strokeWidth="1.200" />
      <path d={curve(SPINE.slice(0, 5))} stroke="#a88070" strokeWidth="1.300" />
      <path d={curve(GREEN)} stroke="#22e070" strokeWidth="1.600" />
      <path d={curve(LEFT_TOP)} stroke="#20d8f4" strokeWidth="1.600" />
      <path d={curve(CYAN_BOTTOM)} stroke="#20e4f4" strokeWidth="1.600" />
      <path d="M381 406L682 309M599 337l6-2" stroke="#8a50d8" strokeWidth=".8" />
      <path d={curve(MAGENTA)} stroke="#a050d8" strokeWidth=".8" />
      <path d="M470 261l125 28" stroke="#b4bcb0" strokeWidth=".8" />
      <path d="M595 289l2 86" stroke="#5cc4ee" />
      <path d="M470 265l2 148" stroke="#38b0e0" strokeWidth=".8" />
      <path d={curve(CONTOUR2)} stroke="#7ce4e4" strokeWidth="1.800" />
      <path d="M332 305l127 29 3 164-126-30z" stroke="#e59cb4" strokeWidth=".7" />
      <path d="M339 338l114-37 2 164-113 37z" stroke="#a0e078" strokeWidth=".7" />
    </g>
    <rect x="530" y="226" width="2.500" height="2.500" fill="#8a3050" />
    <g className="font-['Liberation_Sans',Arial,sans-serif] text-[8px] font-bold" fill="#1010e0">
      {AXES.map((a) => (
        <text key={a.t} x={a.x} y={a.y}>
          {a.t}
        </text>
      ))}
      <text x="544" y="310" fill="#18d838">
        u3
      </text>
    </g>
    <g className="font-['Liberation_Sans',Arial,sans-serif] text-[7px]" textAnchor="middle">
      {TAGS.map((t) => (
        <g key={t.n}>
          <rect x={t.x - 4.500} y={t.y - 5.500} width="10" height="10" fill="#fff" stroke="#333" />
          <text x={t.x + 0.500} y={t.y + 2} fill="#222">
            {t.n}
          </text>
        </g>
      ))}
    </g>
    {/* cursor */}
    <path d="M380 221v-4h4M392 217h4v4M396 229v4h-4M384 233h-4v-4" fill="none" stroke="#111" strokeWidth="1.500" />
    <path d="M385 225.500h6M388.500 222v7" fill="none" stroke="#777" strokeWidth=".9" />
    {/* axis triad */}
    <path d="M242 507v-24" stroke="#5a8cd0" strokeWidth="3" />
    <path d="M242 473l3 11h-6z" fill="#5a9ce0" />
    <path d="M242 507l-14 5" stroke="#c84848" strokeWidth="2.500" />
    <path d="M220 514l8-5 1.500 6z" fill="#e04848" />
    <path d="M242 507l18 4.500" stroke="#3ca04c" strokeWidth="2.500" />
    <path d="M268 513.500l-8 1.500 1.500-6z" fill="#34ac48" />
    <circle cx="242" cy="507" r="4" fill="#f0e848" stroke="#c8b830" strokeWidth=".6" />
    <g className="font-['Liberation_Sans',Arial,sans-serif] text-[8px]">
      <text x="239" y="472" fill="#8ab0e8">
        Z
      </text>
      <text x="213" y="519" fill="#f08080">
        X
      </text>
      <text x="269" y="516" fill="#80d090">
        Y
      </text>
    </g>
  </svg>
);

interface BarItem {
  icon: string;
  caret?: boolean;
  active?: boolean;
  divider?: boolean;
  faded?: boolean;
}

const VIEW_BAR: BarItem[] = [
  { icon: 'sketchTools', divider: true },
  { icon: 'zoom', caret: true },
  { icon: 'normal' },
  { icon: 'rotate' },
  { icon: 'triad', caret: true },
  { icon: 'cube', active: true },
  { icon: 'wireCube', caret: true, divider: true },
  { icon: 'eyeOff', caret: true },
  { icon: 'eyeBox', caret: true },
  { icon: 'percent', active: true },
  { icon: 'texture' },
  { icon: 'section', caret: true },
  { icon: 'funnel', caret: true, active: true },
  { icon: 'pencil', faded: true },
  { icon: 'check' },
  { icon: 'cross' },
];

const ViewToolbar = () => (
  <div className="relative mx-auto flex h-[17px] w-fit border-b border-l border-[#888] bg-[#f5f5f5] pr-0.5 text-[#333]">
    <div className="flex w-3 justify-center border-r border-[#999] bg-[#e4e4e4] pt-1">
      <svg viewBox="0 0 8 4" className="h-1 w-2">
        <path d="M0 .5h8M0 2.500h8" stroke="#777" strokeDasharray="1 1" />
      </svg>
    </div>
    {VIEW_BAR.map((item) => (
      <button
        key={item.icon}
        aria-label={item.icon}
        className={clsx(
          'flex items-center',
          item.active && 'bg-[#474747] text-white',
          item.divider && 'border-r border-[#999]',
          item.faded && 'opacity-30'
        )}
      >
        <span className="flex w-4 justify-center">
          <Icon name={item.icon} className="h-[11px] w-[11px]" />
        </span>
        {item.caret && (
          <span className="flex w-[15px] justify-center">
            <Caret />
          </span>
        )}
      </button>
    ))}
  </div>
);

interface TreeNode {
  icon: string;
  label: string;
  plus?: boolean;
  hidden?: boolean;
  red?: boolean;
  selected?: boolean;
  arrow?: boolean;
}

const TREE: TreeNode[] = [
  { icon: 'origin', label: 'Origins', arrow: true },
  { icon: 'sketch', label: 'Vertical Profile', plus: true, red: true },
  { icon: 'sketch', label: 'Horizontal Profile', plus: true, hidden: true },
  { icon: 'patch', label: 'Patch:1' },
  { icon: 'surfGrey', label: 'Surface of extrusion:1', hidden: true },
  { icon: 'sketch', label: 'Sketch:3', plus: true },
  { icon: 'truncation', label: 'Surface truncation:1', red: true },
  { icon: 'knit', label: 'Knit surfaces:1' },
  { icon: 'contour', label: 'Contour:1', red: true },
  { icon: 'contour', label: 'Contour:2', red: true, selected: true },
  { icon: 'planeHatch', label: 'Offset Plane:1' },
  { icon: 'dot', label: 'Point:1' },
  { icon: 'dot', label: 'Point:2' },
  { icon: 'dot', label: 'Point:3' },
  { icon: 'arcTree', label: 'Circular arc:1', red: true },
];

const TreeRow = ({ node }: { node: TreeNode }) => (
  <li className="flex items-center">
    <button aria-label={node.hidden ? 'Show' : 'Hide'} className="flex w-4 justify-center text-[#222]">
      <Icon name={node.hidden ? 'eyeOff' : 'eye'} className="h-2.5 w-2.5" />
    </button>
    <div className={clsx('flex h-4 w-[178px] items-center', node.selected && 'bg-[#58cede]/35')}>
      <span className="flex w-5 justify-end pr-1">
        {node.arrow && (
          <svg viewBox="0 0 4 6" className="h-1 w-[3px]">
            <path d="M0 0l4 3-4 3z" fill="#333" />
          </svg>
        )}
      </span>
      <Icon name={node.icon} className={clsx('h-3 w-3', node.red ? 'text-[#b52834]' : node.hidden ? 'text-[#999]' : 'text-[#333]')} />
      {node.arrow && <span className="mx-0.5 h-1.5 w-1.5 rounded-full bg-[#222]" />}
      <span className={clsx(node.hidden && 'text-[#999]')}>
        {node.plus && '(+)'}
        {node.label}
      </span>
    </div>
  </li>
);

const ModelTree = () => (
  <div className="relative w-[195px]">
    <div className="flex">
      <button aria-label="Tree structure" className="flex h-4 w-4 items-center justify-center bg-[#474747] text-white">
        <Icon name="treeList" className="h-2.5 w-2.5" />
      </button>
      <button aria-label="Tree sequence" className="flex h-4 w-4 items-center justify-center text-[#333]">
        <Icon name="tree" className="h-2.5 w-2.5" />
      </button>
    </div>
    <ul className="mt-[3px] grid h-[260px] auto-rows-fr">
      <li className="flex items-center pl-6">
        <Caret className="mr-1 h-[3px] w-1" />
        <Icon name="part" className="mr-px h-[11px] w-[11px] text-[#222]" />
        Mouse LG (Solids-0)
      </li>
      {TREE.map((node) => (
        <TreeRow key={node.label} node={node} />
      ))}
    </ul>
  </div>
);

const App = () => (
  <div className="flex min-h-screen flex-col border-b-2 border-l border-[#554d4d] border-l-[#888] bg-white font-['Noto_Sans','Open_Sans',sans-serif] text-[7px] leading-[10px] text-[#444]">
    <MenuBar />
    <TabBar />
    <Ribbon />
    <div className="flex flex-1">
      <SideStrip />
      <ParametersPanel />
      <main className="relative flex-1 bg-[#fefefe]">
        <Model />
        <ViewToolbar />
        <ModelTree />
      </main>
    </div>
  </div>
);

export default App;
